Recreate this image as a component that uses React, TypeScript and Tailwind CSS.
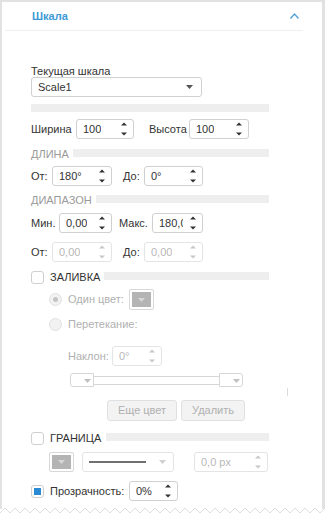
import React from "react";

const Spin = ({ disabled }: { disabled?: boolean }) => {
  const c = disabled ? "#c8c8c8" : "#333";
  return (
    <svg width="6" height="14" viewBox="0 0 6 14" className="absolute right-[6px] top-[2px]">
      <path d="M0 3.5 L3 0.5 L6 3.5Z" fill={c} />
      <path d="M0 10.5 L3 13.5 L6 10.5Z" fill={c} />
    </svg>
  );
};

const Caret = ({ color = "#666", className = "" }: { color?: string; className?: string }) => (
  <svg width="7" height="4" viewBox="0 0 7 4" className={className}>
    <path d="M0 0 L7 0 L3.5 4Z" fill={color} />
  </svg>
);

const Num = ({
  w,
  text,
  disabled,
  clip,
}: {
  w: string;
  text: string;
  disabled?: boolean;
  clip?: string;
}) => (
  <div
    className={`relative h-[20px] shrink-0 rounded-[3px] border bg-white ${w} ${
      disabled ? "border-[#e4e4e4]" : "border-[#d0d0d0]"
    }`}
  >
    <span
      className={`absolute left-[6px] top-0 overflow-hidden whitespace-nowrap leading-[18px] ${
        clip ?? ""
      } ${disabled ? "text-[#b8b8b8]" : "text-[#333]"}`}
    >
      {text}
    </span>
    <Spin disabled={disabled} />
  </div>
);

const Label = ({ w, children, ml = "", color = "text-[#333]" }: { w: string; children: React.ReactNode; ml?: string; color?: string }) => (
  <span className={`shrink-0 whitespace-nowrap leading-[13px] ${w} ${ml} ${color}`}>{children}</span>
);

const Check = ({ checked }: { checked?: boolean }) => (
  <div className="flex h-[13px] w-[13px] shrink-0 items-center justify-center rounded-[3px] border border-[#cfcfcf] bg-white">
    {checked && <div className="h-[7px] w-[7px] bg-[#2a8bd4]" />}
  </div>
);

const Radio = ({ checked }: { checked?: boolean }) => (
  <div className="flex h-[13px] w-[13px] shrink-0 items-center justify-center rounded-full border border-[#e0e0e0] bg-[#f2f2f2]">
    {checked && <div className="h-[5px] w-[5px] rounded-full bg-[#c4c4c4]" />}
  </div>
);

const SectionRow = ({ title, dark, mt, barMt = "mt-[1px]" }: { title: string; dark?: boolean; mt: string; barMt?: string }) => (
  <div className={`flex w-[238px] items-start ${mt}`}>
    <span className={`whitespace-nowrap leading-[13px] ${dark ? "text-[#333]" : "text-[#9a9a9a]"}`}>{title}</span>
    <div className={`ml-[4px] h-[8px] flex-1 bg-[#eeeeee] ${barMt}`} />
  </div>
);

export default function App() {
  return (
    <div className="relative h-[515px] w-[325px] overflow-hidden bg-white font-['Liberation_Sans',Arial,sans-serif] text-[11px]">
      <div className="h-[509px] w-[325px] border-l-2 border-r-[3px] border-t-2 border-[#e2e2e2]">
        {/* header */}
        <div className="ml-[3px] flex h-[29px] w-[298px] items-center justify-between border-b border-[#efefef] pl-[27px] pr-[4px]">
          <span className="font-bold text-[#3d9ad8]">Шкала</span>
          <svg width="9" height="6" viewBox="0 0 9 6" className="mb-[1px]">
            <path d="M0.5 5.5 L4.5 1 L8.5 5.5" fill="none" stroke="#4a9fdb" strokeWidth="1.2" />
          </svg>
        </div>

        <div className="flex flex-col pl-[29px]">
          <span className="mt-[34px] leading-[12px] text-[#333]">Текущая шкала</span>
          <div className="relative flex h-[20px] w-[171px] items-center rounded-[3px] border border-[#d0d0d0] pl-[6px] text-[#333]">
            Scale1
            <Caret color="#555" className="absolute right-[8px] top-[7px]" />
          </div>
          <div className="mt-[7px] h-[8px] w-[238px] bg-[#eeeeee]" />

          {/* Ширина / Высота */}
          <div className="mt-[7px] flex items-center">
            <Label w="w-[45px]">Ширина</Label>
            <Num w="w-[58px]" text="100" />
            <Label w="w-[40px]" ml="ml-[15px]">Высота</Label>
            <Num w="w-[60px]" text="100" />
          </div>

          <SectionRow title="ДЛИНА" mt="mt-[9px]" />

          <div className="mt-[5px] flex items-center">
            <Label w="w-[21px]">От:</Label>
            <Num w="w-[60px]" text="180°" />
            <Label w="w-[21px]" ml="ml-[11px]">До:</Label>
            <Num w="w-[59px]" text="0°" />
          </div>

          <SectionRow title="ДИАПАЗОН" mt="mt-[8px]" />

          <div className="mt-[6px] flex items-center">
            <Label w="w-[28px]">Мин.</Label>
            <Num w="w-[53px]" text="0,00" />
            <Label w="w-[33px]" ml="ml-[7px]">Макс.</Label>
            <Num w="w-[51px]" text="180,0" clip="w-[24px]" />
          </div>

          <div className="mt-[9px] flex items-center">
            <Label w="w-[21px]">От:</Label>
            <Num w="w-[60px]" text="0,00" disabled />
            <Label w="w-[21px]" ml="ml-[11px]">До:</Label>
            <Num w="w-[59px]" text="0,00" disabled />
          </div>

          {/* ЗАЛИВКА */}
          <div className="mt-[9px] flex w-[238px] items-start">
            <Check />
            <span className="ml-[6px] whitespace-nowrap leading-[13px] text-[#333]">ЗАЛИВКА</span>
            <div className="ml-[4px] mt-[1px] h-[8px] flex-1 bg-[#eeeeee]" />
          </div>

          <div className="mt-[5px] flex items-center pl-[18px]">
            <Radio checked />
            <span className="ml-[6px] leading-[13px] text-[#b0b0b0]">Один цвет:</span>
            <div className="ml-[5px] flex h-[21px] w-[25px] items-center justify-center rounded-[2px] border border-[#d8d8d8] bg-white p-[2px]">
              <div className="flex h-full w-full items-center justify-center bg-[#b4b4b4]">
                <Caret color="#d6d6d6" />
              </div>
            </div>
          </div>

          <div className="mt-[8px] flex items-center pl-[18px]">
            <Radio />
            <span className="ml-[6px] leading-[13px] text-[#b0b0b0]">Перетекание:</span>
          </div>

          <div className="mt-[15px] flex items-center pl-[37px]">
            <Label w="w-[44px]" color="text-[#b0b0b0]">Наклон:</Label>
            <Num w="w-[50px]" text="0°" disabled />
          </div>

          {/* gradient slider */}
          <div className="mt-[7px] flex items-center pl-[39px]">
            <div className="relative h-[14px] w-[24px] rounded-l-[3px] border border-[#d6d6d6] bg-white">
              <Caret color="#c0c0c0" className="absolute left-[13px] top-[5px]" />
            </div>
            <div className="h-[9px] w-[125px] border-y border-[#d6d6d6] bg-white" />
            <div className="relative h-[14px] w-[24px] rounded-r-[3px] border border-[#d6d6d6] bg-white">
              <Caret color="#c0c0c0" className="absolute left-[13px] top-[5px]" />
            </div>
          </div>

          <div className="mt-[13px] flex gap-[4px] pl-[76px]">
            <div className="flex h-[21px] w-[70px] items-center justify-center rounded-[3px] border border-[#e0e0e0] bg-[#f3f3f3] text-[#b0b0b0]">
              Еще цвет
            </div>
            <div className="flex h-[21px] w-[64px] items-center justify-center rounded-[3px] border border-[#e0e0e0] bg-[#f3f3f3] text-[#b0b0b0]">
              Удалить
            </div>
          </div>

          {/* ГРАНИЦА */}
          <div className="mt-[11px] flex w-[238px] items-start">
            <Check />
            <span className="ml-[6px] whitespace-nowrap leading-[13px] text-[#333]">ГРАНИЦА</span>
            <div className="ml-[5px] mt-[1px] h-[8px] flex-1 bg-[#eeeeee]" />
          </div>

          <div className="mt-[7px] flex items-center pl-[18px]">
            <div className="flex h-[20px] w-[25px] items-center justify-center rounded-[2px] border border-[#d8d8d8] bg-white p-[2px]">
              <div className="flex h-full w-full items-center justify-center bg-[#b4b4b4]">
                <Caret color="#d6d6d6" />
              </div>
            </div>
            <div className="relative ml-[8px] flex h-[20px] w-[92px] items-center rounded-[3px] border border-[#e4e4e4] bg-white pl-[6px]">
              <div className="h-[2px] w-[57px] bg-[#707070]" />
              <Caret color="#cfcfcf" className="absolute right-[7px] top-[7px]" />
            </div>
            <div className="ml-[20px]">
              <Num w="w-[74px]" text="0,0 px" disabled />
            </div>
          </div>

          <div className="mt-[9px] flex items-center">
            <Check checked />
            <Label w="w-[79px]" ml="ml-[6px]">Прозрачность:</Label>
            <Num w="w-[49px]" text="0%" />
          </div>
        </div>
      </div>

      {/* small scrollbar remnant */}
      <div className="absolute left-[287px] top-[388px] h-[8px] w-px bg-[#dcdcdc]" />

      {/* torn bottom edge */}
      <svg width="325" height="10" viewBox="0 0 325 10" className="absolute left-0 top-[505px]">
        <polygon
          points={
            Array.from({ length: 34 }, (_, i) => `${i * 10},${8} ${i * 10 + 5},${3}`).join(" ") + " 340,8 340,10 0,10"
          }
          fill="#ffffff"
        />
        <polyline
          points={Array.from({ length: 34 }, (_, i) => `${i * 10},${8} ${i * 10 + 5},${3}`).join(" ")}
          fill="none"
          stroke="#dedede"
          strokeWidth="1"
        />
      </svg>
    </div>
  );
}
